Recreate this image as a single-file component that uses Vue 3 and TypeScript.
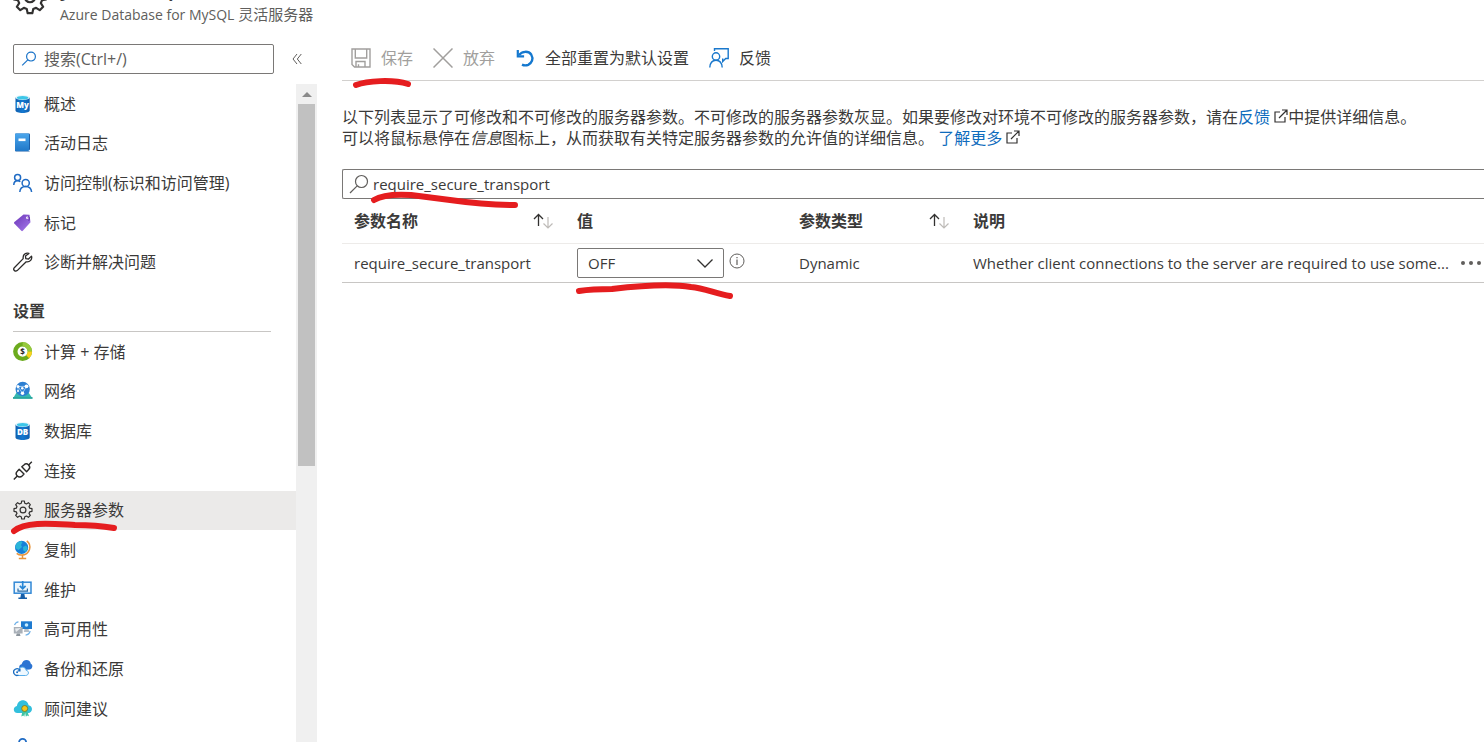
<script setup lang="ts">
import { ref } from 'vue'

interface NavItem {
  label: string
  icon: string
  active?: boolean
}

const cylinder = (id: string, label: string): string => `
  <defs><linearGradient id="${id}" x1="0" x2="1" y1="0" y2="0"><stop offset="0" stop-color="#0f5fae"/><stop offset=".5" stop-color="#1478d0"/><stop offset="1" stop-color="#0f5fae"/></linearGradient></defs>
  <path d="M2.500 3.500v13c0 1.400 3.200 2.500 7.100 2.500s7.100-1.100 7.100-2.500v-13z" fill="url(#${id})"/>
  <ellipse cx="9.600" cy="3.500" rx="7.100" ry="2.600" fill="#e8f6fb"/>
  <ellipse cx="9.600" cy="3.700" rx="5.800" ry="1.800" fill="#3cc6e8"/>
  <text x="9.600" y="13.800" text-anchor="middle" font-family="Open Sans, sans-serif" font-size="8" font-weight="800" fill="#fff">${label}</text>`

const gear = `<path d="M8.700 1h2.600l.5 2.300 1.600.7 2-1.300 1.900 1.900-1.300 2 .7 1.600 2.300.5v2.600l-2.300.5-.7 1.600 1.300 2-1.900 1.900-2-1.300-1.600.7-.5 2.300H8.700l-.5-2.300-1.600-.7-2 1.300-1.900-1.900 1.300-2-.7-1.600L1 11.300V8.700l2.300-.5.700-1.600-1.300-2 1.900-1.900 2 1.300 1.600-.7z" fill="none" stroke="#323130" stroke-width="1.200" stroke-linejoin="round"/><circle cx="10" cy="10" r="2.900" fill="none" stroke="#323130" stroke-width="1.200"/>`

const general: NavItem[] = [
  { label: '概述', icon: cylinder('cyl-my', 'My') },
  {
    label: '活动日志',
    icon: `<defs><linearGradient id="book" x1="0" x2="0" y1="0" y2="1"><stop offset="0" stop-color="#4ba6ec"/><stop offset="1" stop-color="#2078c8"/></linearGradient></defs>
      <rect x="2" y=".5" width="15" height="18" rx="1" fill="#1b5ea8"/><path d="M4 16.800h13V18H4z" fill="#dceefb"/><rect x="2" y=".5" width="14" height="17.500" rx="1" fill="url(#book)"/><rect x="5.500" y="5.500" width="7" height="2.600" fill="#fff"/>`,
  },
  {
    label: '访问控制(标识和访问管理)',
    icon: `<g fill="none" stroke="#1f6bc4" stroke-width="1.500"><circle cx="4.600" cy="4.500" r="3"/><path d="M.8 12c0-2.600 1.500-4.300 3.800-4.300 1.100 0 2 .3 2.700 1"/><circle cx="12.700" cy="10" r="3.600"/><path d="M6.800 19c.2-3.300 2.600-5.400 5.900-5.400s5.600 2.100 5.900 5.400"/></g>`,
  },
  {
    label: '标记',
    icon: `<defs><linearGradient id="tag" x1="0" x2="1" y1="0" y2="1"><stop offset="0" stop-color="#6b35b8"/><stop offset="1" stop-color="#a67bea"/></linearGradient></defs>
      <path d="M10.500 1.500 16.500 1.800 17.500 9.200l-7.700 8.600q-.7.700-1.500 0L1.300 10.500q-.7-.8.100-1.600z" fill="url(#tag)"/><circle cx="14.300" cy="4.800" r="1.200" fill="#fff"/><path d="M14.500 4.800c1.900-2.400 2.600.5 1.300 3" fill="none" stroke="#5a2aa0" stroke-width=".9"/>`,
  },
  {
    label: '诊断并解决问题',
    icon: `<path d="M15.900 1.400c-2.800-1-6.300.9-5.700 5.200L1.300 15.700c-1.700 2 .9 4.500 2.900 2.900l9-8.800c3.800.6 6.300-2.600 5.300-5.700l-3 2.900-2.700-.4-.3-2.500z" fill="none" stroke="#2b2a29" stroke-width="1.300" stroke-linejoin="round"/>`,
  },
]

const settings: NavItem[] = [
  {
    label: '计算 + 存储',
    icon: `<circle cx="9.600" cy="9.600" r="7.300" fill="#fff" stroke="#6cab1e" stroke-width="4.400"/><path d="M9.600 2.300a7.300 7.300 0 0 1 7.300 7.300" fill="none" stroke="#96c93d" stroke-width="4.400"/><path d="M16.900 9.600a7.300 7.300 0 0 1-2.200 5.200" fill="none" stroke="#fbd21c" stroke-width="4.400"/><text x="9.600" y="12.500" text-anchor="middle" font-family="Open Sans, sans-serif" font-size="8" font-weight="700" fill="#2b2a29">$</text>`,
  },
  {
    label: '网络',
    icon: `<path d="M3.500 11.500h12l4 6H0z" fill="#35b7b0"/><path d="M0 16h19.500v1.800H0z" fill="#2aa79f"/><circle cx="9.700" cy="8" r="7.200" fill="#2d7fd2"/><path d="m5 5.500 8.500-.2M5 5.500l4.500 6.800M13.500 5.300 9.500 12.300M5 5.500v4.500" fill="none" stroke="#b9dcf8" stroke-width=".8"/><g fill="#fff"><circle cx="5" cy="5.500" r="1.500"/><circle cx="13.500" cy="5.300" r="1.900"/><circle cx="9.500" cy="12.300" r="1.700"/><circle cx="9.300" cy="7.300" r="1.300"/><circle cx="5" cy="10" r="1"/></g>`,
  },
  { label: '数据库', icon: cylinder('cyl-db', 'DB') },
  {
    label: '连接',
    icon: `<g fill="none" stroke="#2b2a29" stroke-width="1.400" stroke-linejoin="round"><path d="m.8 18.400 3.500-3.500M15.400 4.300l3.400-3.500"/><path d="M6.200 8.200 4.300 10.200a3.300 3.300 0 0 0 4.800 4.800l1.900-2z"/><path d="m8.800 5.800 2.100-1.900a3.200 3.200 0 0 1 4.700 4.700l-2 2.100z"/></g>`,
  },
  { label: '服务器参数', icon: gear, active: true },
  {
    label: '复制',
    icon: `<path d="M13.800.8c5.500 4.300 3.400 14-5.300 14.200-2.200 0-3.600-.7-4.800-1.700" fill="none" stroke="#e8943a" stroke-width="1.500"/><path d="M9.500 15v3.200M5.800 18.600h7.400" stroke="#e8943a" stroke-width="1.500"/><circle cx="8.600" cy="7.400" r="6.600" fill="#1680d8"/><path d="M3 4.500C5 1 8.500.5 9.500 2L8 5l1 2-3.500 3L2.300 8zM10 7l3-1.500 1.800 2.500-2 3.800-2.500-1.300z" fill="#2bb5d8"/>`,
  },
  {
    label: '维护',
    icon: `<rect x="1.200" y="2.200" width="16.800" height="11" fill="#eaf5fd" stroke="#3288d6" stroke-width="1.500"/><path d="M8 14h3.400l.6 3.500h2V19H5.400v-1.500h2z" fill="#185fa8"/><path d="M9.700 1v7.500M6.800 5.800l2.900 3 2.900-3" fill="none" stroke="#2585d5" stroke-width="1.700"/><path d="M5 8.500v2.700h9.400V8.500" fill="none" stroke="#2b6ca8" stroke-width="1.200"/>`,
  },
  {
    label: '高可用性',
    icon: `<rect x="8" y="2.300" width="11" height="7.700" fill="#1f7bd0"/><path d="M11.500 10h4l.8 3h-5.500z" fill="#b6bec7"/><circle cx="13.500" cy="6" r="1.800" fill="#c4ecff"/><path d="M.8 8h8.800v6.500H.8z" fill="#a9b0b8"/><path d="m2 9.500 6-.5-5 4z" fill="#e8ebee"/><path d="M3.800 14.500h3l.7 2.500H3z" fill="#8c949c"/><path d="M1.500 6c.8-2 2-3 4-3.200M17.200 12c-.6 2.300-2.200 3.800-4.600 4.200" fill="none" stroke="#6fb1e8" stroke-width="1.200"/>`,
  },
  {
    label: '备份和还原',
    icon: `<path d="M9.500 11C7 11 6 9.300 6.200 7.800 6.400 6 7.500 5.300 8.600 5.200 9.300 2.500 11.300 1 13.500 1c2.300 0 4 1.600 4.300 3.700 1.200.5 1.800 1.600 1.500 3-.3 1.600-1.300 2.800-3 2.800z" fill="#2c74d2"/><path d="M4.600 16.500h8c3.600-.2 3.800-4.700.5-5.200-.5-2.700-3.500-4.200-6-2.500C6.300 9.300 6 10 5.800 10.300 3 10 1 11.700 1 14" fill="#eef8ff" stroke="#58aeea" stroke-width="1"/><circle cx="4" cy="13" r="3.300" fill="#fff"/><path d="M6.700 11.200A3.300 3.300 0 1 0 5.500 16M6.900 9.500v2.300H4.600" fill="none" stroke="#1b6ec2" stroke-width="1.300"/><circle cx="4.100" cy="13.200" r="1" fill="#1b6ec2"/>`,
  },
  {
    label: '顾问建议',
    icon: `<path d="M4.500 14C2 14 .8 12.400.8 10.500c0-1.800 1.300-3.300 3.100-3.500C4.500 3.300 7 1.200 9.900 1.200c3 0 5.300 2.200 5.700 5 2 .2 3.400 1.800 3.400 3.800 0 2.200-1.600 4-3.700 4z" fill="#32bfdc"/><path d="m9.500 12-1.200 5.500 2.200-1 .8 1.300.8-4 .8 4 1.200-1.300 1.900.8L14.300 12z" fill="#3fc4a4"/><circle cx="11.700" cy="9.500" r="3" fill="#f5c518" stroke="#65752b" stroke-width=".8"/>`,
  },
  {
    label: '',
    icon: `<circle cx="9.600" cy="4.500" r="3.600" fill="none" stroke="#1f6bc4" stroke-width="1.700"/>`,
  },
]

const groups = [
  { key: 'general', title: '', items: general },
  { key: 'settings', title: '设置', items: settings },
]

const navFilter = ref('')
const paramFilter = ref('require_secure_transport')
const value = ref('OFF')
</script>

<template>
  <div class="blade">
    <header class="blade-header">
      <svg class="header-gear" viewBox="0 0 20 20" aria-hidden="true" v-html="gear"></svg>
      <div class="titles">
        <h1><span>y</span><span>p</span></h1>
        <p><span class="latin">Azure Database for MySQL</span> 灵活服务器</p>
      </div>
    </header>

    <div class="body">
      <aside class="sidebar">
        <div class="side-search">
          <label class="nav-filter">
            <svg viewBox="0 0 20 20" aria-hidden="true"><g fill="none" stroke="#1a73c8" stroke-width="1.500"><circle cx="12.500" cy="7" r="5.500" /><path d="M8.500 11 1.500 18" /></g></svg>
            <input v-model="navFilter" type="text" placeholder="搜索(Ctrl+/)" aria-label="搜索" />
          </label>
          <button class="collapse" type="button" aria-label="折叠">
            <svg viewBox="0 0 10 12" aria-hidden="true"><path d="M5 1 1 6l4 5M9.300 1l-4 5 4 5" fill="none" stroke="#605e5c" /></svg>
          </button>
        </div>
        <div class="nav-area">
          <nav class="nav">
            <section v-for="group in groups" :key="group.key">
              <h2 v-if="group.title">{{ group.title }}</h2>
              <ul :class="group.key">
                <li v-for="item in group.items" :key="item.label">
                  <a href="#" :class="{ active: item.active }">
                    <svg viewBox="0 0 20 20" aria-hidden="true" v-html="item.icon"></svg>
                    <span>{{ item.label }}</span>
                  </a>
                </li>
              </ul>
            </section>
          </nav>
          <div class="scrollbar" aria-hidden="true">
            <svg viewBox="0 0 10 5"><path d="M0 5 5 0l5 5z" fill="#8a8a8a" /></svg>
            <div class="thumb"></div>
          </div>
        </div>
      </aside>

      <main class="content">
        <div class="toolbar">
          <button type="button" disabled>
            <svg viewBox="0 0 20 20" aria-hidden="true"><g fill="none" stroke="#a19f9d" stroke-width="1.400"><path d="M1 1h18v18H3.500L1 16.500z" /><path d="M4.300 1v9h11.400V1M5 19v-5.500h9V19M7.500 19v-2.800" /></g></svg>
            保存
          </button>
          <button type="button" disabled>
            <svg viewBox="0 0 20 20" aria-hidden="true"><path d="m.5.500 19 19M19.500.500l-19 19" fill="none" stroke="#a19f9d" stroke-width="1.500" /></svg>
            放弃
          </button>
          <button type="button">
            <svg viewBox="0 0 20 20" aria-hidden="true"><path d="M4 7C7 3 13.500 2.700 16.200 6.500c2.600 4.300.6 8.600-3 10.300-2.200.9-4.300.7-6.200-.2" fill="none" stroke="#1478cf" stroke-width="2.400" /><path d="M2.800 2v6.300h6.300" fill="none" stroke="#1478cf" stroke-width="2.200" /></svg>
            全部重置为默认设置
          </button>
          <button type="button">
            <svg viewBox="0 0 20 20" aria-hidden="true"><g fill="none" stroke="#1a78cc" stroke-width="1.400"><path d="M5.500 3V.8h13.700v9.700h-2.500l-3 3v-3" /><circle cx="7" cy="8.500" r="3.700" /><path d="M.8 19.500c.3-4.500 2.600-7.200 6.200-7.200s5.900 2.700 6.200 7.200" /></g></svg>
            反馈
          </button>
        </div>

        <p class="intro">
          以下列表显示了可修改和不可修改的服务器参数。不可修改的服务器参数灰显。如果要修改对环境不可修改的服务器参数，请在<a href="#">反馈 <svg viewBox="0 0 14 14" aria-hidden="true"><path d="M6 3H1v10h10V8M8 1h5v5M13 1 5 9" fill="none" stroke="#323130" stroke-width="1.200" /></svg></a>中提供详细信息。<br />
          可以将鼠标悬停在<em>信息</em>图标上，从而获取有关特定服务器参数的允许值的详细信息。 <a href="#">了解更多 <svg viewBox="0 0 14 14" aria-hidden="true"><path d="M6 3H1v10h10V8M8 1h5v5M13 1 5 9" fill="none" stroke="#323130" stroke-width="1.200" /></svg></a>
        </p>

        <label class="param-filter">
          <svg viewBox="0 0 20 20" aria-hidden="true"><g fill="none" stroke="#605e5c" stroke-width="1.200"><circle cx="12.500" cy="7.500" r="6" /><path d="M8.200 11.800 1 19" /></g></svg>
          <input v-model="paramFilter" type="text" aria-label="筛选参数" />
        </label>

        <table>
          <colgroup>
            <col class="c-name" />
            <col class="c-value" />
            <col class="c-type" />
            <col />
            <col class="c-more" />
          </colgroup>
          <thead>
            <tr>
              <th v-for="(head, i) in ['参数名称', '值', '参数类型', '说明']" :key="head" scope="col">
                <div class="head">
                  {{ head }}
                  <svg v-if="i === 0 || i === 2" viewBox="0 0 20 16" aria-hidden="true"><path d="M5.500 13V1.500M1 6l4.500-4.500L10 6" fill="none" stroke="#323130" stroke-width="1.300" /><path d="M15 4v11M10.500 10.500 15 15l4.500-4.500" fill="none" stroke="#bebbb8" stroke-width="1.200" /></svg>
                </div>
              </th>
              <td></td>
            </tr>
          </thead>
          <tbody>
            <tr>
              <td>require_secure_transport</td>
              <td>
                <div class="value">
                  <div class="select">
                    <select v-model="value" aria-label="require_secure_transport">
                      <option>OFF</option>
                      <option>ON</option>
                    </select>
                    <svg viewBox="0 0 16 9" aria-hidden="true"><path d="m.5.500 7.500 7.500L15.500.500" fill="none" stroke="#323130" stroke-width="1.300" /></svg>
                  </div>
                  <svg class="info" viewBox="0 0 16 16" aria-hidden="true"><circle cx="8" cy="8" r="7" fill="none" stroke="#605e5c" /><path d="M8 6.500V12M8 4v1.300" stroke="#605e5c" stroke-width="1.200" /></svg>
                </div>
              </td>
              <td>Dynamic</td>
              <td>Whether client connections to the server are required to use some...</td>
              <td class="more">
                <button type="button" aria-label="更多">
                  <svg viewBox="0 0 22 6" aria-hidden="true"><g fill="#605e5c"><circle cx="3" cy="3" r="2" /><circle cx="11" cy="3" r="2" /><circle cx="19" cy="3" r="2" /></g></svg>
                </button>
              </td>
            </tr>
          </tbody>
        </table>
      </main>
    </div>

    <svg class="marks" width="760" height="560" viewBox="0 0 760 560" aria-hidden="true">
      <g fill="none" stroke="#e51d1f" stroke-width="6" stroke-linecap="round" stroke-linejoin="round">
        <path d="M356 85C367 81 392 79 408 84" />
        <path d="M374 200C382 195 395 194 411 195L450 200Q485 205 515 205" />
        <path d="M579 291Q592 289 612 289C638 286 672 284 691 287C705 288 716 294 730 296" />
        <path d="M14 531C26 521 54 524 75 525Q96 525 114 528" />
      </g>
    </svg>
  </div>
</template>

<style>
body {
  margin: 0;
  background: #fff;
}
</style>

<style scoped>
.blade {
  position: relative;
  display: flex;
  flex-direction: column;
  height: 100vh;
  overflow: hidden;
  color: #3b3a39;
  font-family: "Open Sans", "Noto Sans CJK SC", sans-serif;
  font-size: 16px;
  line-height: 22px;
}

button,
input,
select {
  font: inherit;
  color: inherit;
  background: none;
  border: 0;
  padding: 0;
  margin: 0;
  outline: none;
}

svg {
  display: block;
  flex: none;
}

.blade-header {
  display: flex;
  align-items: flex-end;
  gap: 12px;
  height: 27px;
  padding-left: 12px;
  overflow: hidden;
  flex: none;
}

.header-gear {
  width: 36px;
  height: 36px;
  margin-bottom: 12px;
}

.titles h1 {
  display: flex;
  gap: 96px;
  margin: 0;
  font-size: 22px;
  line-height: 30px;
  font-weight: 600;
}

.titles p {
  margin: 0;
  font-size: 15px;
  line-height: 24px;
  color: #605e5c;
}

.titles .latin {
  font-size: 14px;
}

.body {
  display: flex;
  flex: 1;
  min-height: 0;
}

.sidebar {
  display: flex;
  flex-direction: column;
  flex: none;
  width: 317px;
}

.side-search {
  display: flex;
  align-items: center;
  gap: 18px;
  padding: 17px 15px 10px 13px;
}

.nav-filter {
  display: flex;
  align-items: center;
  flex: 1;
  gap: 7px;
  height: 28px;
  padding-left: 7px;
  border: 1px solid #7a7876;
  border-radius: 2px;
}

.nav-filter svg {
  width: 16px;
  height: 16px;
}

.nav-filter input {
  flex: 1;
  min-width: 0;
}

.nav-filter input::placeholder {
  color: #605e5c;
  opacity: 1;
}

.collapse svg {
  width: 10px;
  height: 12px;
}

.nav-area {
  display: flex;
  flex: 1;
  min-height: 0;
}

.nav {
  flex: 1;
  overflow: hidden;
}

.nav ul {
  display: grid;
  grid-auto-rows: 1fr;
  margin: 0;
  padding: 0;
  list-style: none;
}

.nav .general {
  height: 198px;
}

.nav .settings {
  height: 436px;
}

.nav a {
  display: flex;
  align-items: center;
  gap: 11px;
  height: 100%;
  padding-left: 13px;
  color: inherit;
  text-decoration: none;
}

.nav a.active {
  background: #ebeae9;
}

.nav a svg {
  width: 20px;
  height: 20px;
}

.nav h2 {
  margin: 0 25px 0 13px;
  padding: 18px 0 9px;
  border-bottom: 1px solid #c8c6c4;
  font-size: 16px;
  line-height: 22px;
  font-weight: 600;
}

.scrollbar {
  display: flex;
  flex-direction: column;
  align-items: center;
  width: 21px;
  background: #f0f0f0;
}

.scrollbar svg {
  width: 10px;
  height: 5px;
  margin: 8px 0 7px;
}

.thumb {
  width: 17px;
  height: 55%;
  background: #c1c1c1;
}

.content {
  flex: 1;
  min-width: 0;
  padding-left: 25px;
}

.toolbar {
  display: flex;
  align-items: center;
  gap: 20px;
  height: 54px;
  box-sizing: border-box;
  padding: 9px 0 0 9px;
  border-bottom: 1px solid #d2d0ce;
}

.toolbar button {
  display: flex;
  align-items: center;
  gap: 10px;
}

.toolbar button:disabled {
  color: #a19f9d;
}

.toolbar svg {
  width: 20px;
  height: 20px;
}

.intro {
  margin: 26px 0 20px;
  line-height: 21px;
  white-space: nowrap;
}

.intro a {
  color: #0f6cbd;
  text-decoration: none;
}

.intro svg {
  display: inline-block;
  width: 14px;
  height: 14px;
}

.param-filter {
  display: flex;
  align-items: center;
  gap: 4px;
  height: 28px;
  padding-left: 6px;
  border: 1px solid #7a7876;
  border-right: 0;
  border-radius: 2px 0 0 2px;
}

.param-filter svg {
  width: 20px;
  height: 20px;
}

.param-filter input {
  flex: 1;
  font-size: 15px;
}

table {
  width: 100%;
  border-collapse: collapse;
  table-layout: fixed;
  font-size: 15px;
}

.c-name {
  width: 223px;
}

.c-value {
  width: 222px;
}

.c-type {
  width: 174px;
}

.c-more {
  width: 24px;
}

th,
td {
  height: 38px;
  padding: 0 0 0 12px;
  text-align: left;
  white-space: nowrap;
  border-bottom: 1px solid #c8c6c4;
}

thead th,
thead td {
  height: 44px;
  border-bottom-color: #edebe9;
  font-size: 16px;
  font-weight: 600;
}

.head {
  display: flex;
  justify-content: space-between;
  align-items: center;
  padding-right: 12px;
}

.head svg {
  width: 20px;
  height: 16px;
}

.value {
  display: flex;
  gap: 5px;
}

.select {
  display: grid;
  align-items: center;
  justify-items: end;
  width: 147px;
}

.select select,
.select svg {
  grid-area: 1 / 1;
}

.select select {
  width: 100%;
  height: 30px;
  padding-left: 10px;
  border: 1px solid #7a7876;
  border-radius: 2px;
  appearance: none;
}

.select svg {
  width: 16px;
  height: 9px;
  margin-right: 11px;
  pointer-events: none;
}

.info {
  width: 16px;
  height: 16px;
  margin-top: 5px;
}

td.more {
  padding: 0;
}

.more button {
  display: block;
}

.more svg {
  width: 22px;
  height: 6px;
}

.marks {
  position: absolute;
  top: 0;
  left: 0;
  pointer-events: none;
}
</style>
